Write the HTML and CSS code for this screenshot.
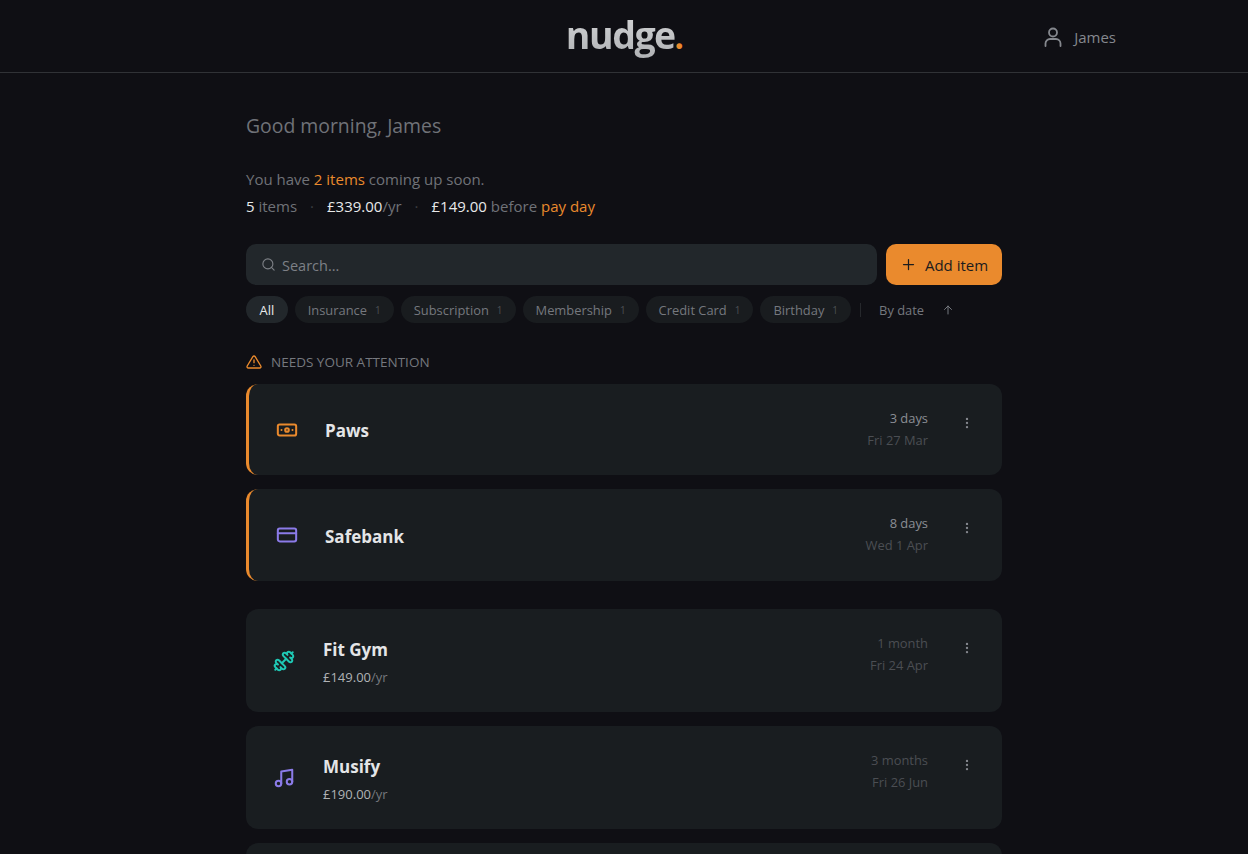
FILE: index.html
```html
<!DOCTYPE html>
<html lang="en">
<head>
    <meta charset="UTF-8">
    <meta name="viewport" content="width=device-width, initial-scale=1.0">
    <title>nudge</title>
    <link rel="stylesheet" href="styles.css">
</head>
<body>
    <header class="topbar">
        <div class="logo"><span class="logo-word">nudge</span><span class="logo-dot">.</span></div>
        <div class="user">
            <svg class="user-icon" viewBox="0 0 24 24" fill="none" stroke="currentColor" stroke-width="1.8" stroke-linecap="round" stroke-linejoin="round">
                <circle cx="12" cy="7.5" r="4"/>
                <path d="M4.5 21v-2.5a4.5 4.5 0 0 1 4.5-4.5h6a4.5 4.5 0 0 1 4.5 4.5V21"/>
            </svg>
            <span>James</span>
        </div>
    </header>

    <main class="container">
        <h1 class="greeting">Good morning, James</h1>
        <p class="soon">You have <span class="accent">2 items</span> coming up soon.</p>
        <p class="stats">
            <span><b>5</b> items</span>
            <span class="sep">·</span>
            <span><b>£339.00</b>/yr</span>
            <span class="sep">·</span>
            <span><b>£149.00</b> before <span class="accent">pay day</span></span>
        </p>

        <div class="toolbar">
            <label class="search">
                <svg class="search-icon" viewBox="0 0 24 24" fill="none" stroke="currentColor" stroke-width="1.8" stroke-linecap="round">
                    <circle cx="11" cy="11" r="8"/>
                    <path d="M21 21l-4.3-4.3"/>
                </svg>
                <input type="text" placeholder="Search...">
            </label>
            <button class="add-btn">
                <svg class="plus-icon" viewBox="0 0 24 24" fill="none" stroke="currentColor" stroke-width="2" stroke-linecap="round">
                    <path d="M12 4v16M4 12h16"/>
                </svg>
                Add item
            </button>
        </div>

        <div class="filters">
            <span class="chip active">All</span>
            <span class="chip">Insurance <i>1</i></span>
            <span class="chip">Subscription <i>1</i></span>
            <span class="chip">Membership <i>1</i></span>
            <span class="chip">Credit Card <i>1</i></span>
            <span class="chip">Birthday <i>1</i></span>
            <span class="divider"></span>
            <span class="sort">By date</span>
            <svg class="sort-icon" viewBox="0 0 24 24" fill="none" stroke="currentColor" stroke-width="2" stroke-linecap="round" stroke-linejoin="round">
                <path d="M12 20V4M5 11l7-7 7 7"/>
            </svg>
        </div>

        <h2 class="section-title">
            <svg class="warn-icon" viewBox="0 0 24 24" fill="none" stroke="currentColor" stroke-width="2" stroke-linecap="round" stroke-linejoin="round">
                <path d="M10.3 3.9 1.8 18a2 2 0 0 0 1.7 3h17a2 2 0 0 0 1.7-3L13.7 3.9a2 2 0 0 0-3.4 0z"/>
                <path d="M12 9v4M12 17h.01"/>
            </svg>
            NEEDS YOUR ATTENTION
        </h2>

        <section class="card urgent">
            <svg class="card-icon orange" viewBox="0 0 24 24" fill="none" stroke="currentColor" stroke-width="2.2" stroke-linecap="round" stroke-linejoin="round">
                <rect x="2" y="6" width="20" height="12" rx="2"/>
                <circle cx="12" cy="12" r="2"/>
                <path d="M6 12h.01M18 12h.01"/>
            </svg>
            <div class="card-main"><div class="card-name">Paws</div></div>
            <div class="card-when">
                <div class="when-rel">3 days</div>
                <div class="when-date">Fri 27 Mar</div>
            </div>
            <svg class="more" viewBox="0 0 24 24" fill="currentColor"><circle cx="12" cy="5" r="2"/><circle cx="12" cy="12" r="2"/><circle cx="12" cy="19" r="2"/></svg>
        </section>

        <section class="card urgent">
            <svg class="card-icon purple" viewBox="0 0 24 24" fill="none" stroke="currentColor" stroke-width="2.2" stroke-linecap="round" stroke-linejoin="round">
                <rect x="2" y="5" width="20" height="14" rx="2"/>
                <path d="M2 10h20"/>
            </svg>
            <div class="card-main"><div class="card-name">Safebank</div></div>
            <div class="card-when">
                <div class="when-rel">8 days</div>
                <div class="when-date">Wed 1 Apr</div>
            </div>
            <svg class="more" viewBox="0 0 24 24" fill="currentColor"><circle cx="12" cy="5" r="2"/><circle cx="12" cy="12" r="2"/><circle cx="12" cy="19" r="2"/></svg>
        </section>

        <div class="list">
            <section class="card">
                <svg class="card-icon teal" viewBox="0 0 24 24" fill="none" stroke="currentColor" stroke-width="2.2" stroke-linecap="round" stroke-linejoin="round">
                    <g transform="matrix(-1 0 0 1 24 0)">
                        <path d="M14.4 14.4 9.6 9.6"/>
                        <path d="M18.66 21.49a2 2 0 1 1-2.83-2.83l-1.77 1.77a2 2 0 1 1-2.83-2.83l6.36-6.36a2 2 0 1 1 2.83 2.83l-1.77 1.77a2 2 0 1 1 2.83 2.83z"/>
                        <path d="m21.5 21.5-1.4-1.4"/>
                        <path d="M3.9 3.9 2.5 2.5"/>
                        <path d="M6.4 12.77a2 2 0 1 1-2.83-2.83l1.77-1.77a2 2 0 1 1-2.83-2.83l2.83-2.83a2 2 0 1 1 2.83 2.83l1.77-1.77a2 2 0 1 1 2.83 2.83z"/>
                    </g>
                </svg>
                <div class="card-main">
                    <div class="card-name">Fit Gym</div>
                    <div class="card-price">£149.00<span>/yr</span></div>
                </div>
                <div class="card-when">
                    <div class="when-rel far">1 month</div>
                    <div class="when-date">Fri 24 Apr</div>
                </div>
                <svg class="more" viewBox="0 0 24 24" fill="currentColor"><circle cx="12" cy="5" r="2"/><circle cx="12" cy="12" r="2"/><circle cx="12" cy="19" r="2"/></svg>
            </section>

            <section class="card">
                <svg class="card-icon purple" viewBox="0 0 24 24" fill="none" stroke="currentColor" stroke-width="2.2" stroke-linecap="round" stroke-linejoin="round">
                    <path d="M9 18V5l12-2v13"/>
                    <circle cx="6" cy="18" r="3"/>
                    <circle cx="18" cy="16" r="3"/>
                </svg>
                <div class="card-main">
                    <div class="card-name">Musify</div>
                    <div class="card-price">£190.00<span>/yr</span></div>
                </div>
                <div class="card-when">
                    <div class="when-rel far">3 months</div>
                    <div class="when-date">Fri 26 Jun</div>
                </div>
                <svg class="more" viewBox="0 0 24 24" fill="currentColor"><circle cx="12" cy="5" r="2"/><circle cx="12" cy="12" r="2"/><circle cx="12" cy="19" r="2"/></svg>
            </section>

            <section class="card"></section>
        </div>
    </main>
</body>
</html>
```

FILE: styles.css
```css
html, body {
    height: 100%;
    overflow: hidden;
}

body {
    font-family: 'Open Sans', sans-serif;
    background-color: #0f0f14;
    margin: 0;
    color: #8b8e94;
}

.topbar {
    height: 72px;
    border-bottom: 1px solid #303236;
    display: flex;
    align-items: center;
    justify-content: center;
    position: relative;
}

.logo {
    margin-top: -4px;
    font-size: 37.5px;
    font-weight: 700;
    letter-spacing: -1.5px;
}

.logo-word {
    background: linear-gradient(#d6d7d9, #aeb0b3);
    -webkit-background-clip: text;
    background-clip: text;
    color: transparent;
}

.logo-dot {
    font-family: 'Lato', sans-serif;
    color: #ea8a2d;
}

.user {
    position: absolute;
    right: 132px;
    top: 25px;
    display: flex;
    align-items: center;
    gap: 9px;
    font-size: 15px;
    color: #85888e;
}

.user-icon {
    width: 24px;
    height: 24px;
}

.container {
    width: 756px;
    margin: 0 auto;
    padding-top: 39px;
}

.greeting {
    margin: 0 0 27px;
    font-size: 19.4px;
    line-height: 27px;
    font-weight: 400;
    color: #6f7278;
}

.soon, .stats {
    margin: 0;
    font-size: 15px;
    line-height: 27px;
    color: #6f7278;
}

.stats {
    display: flex;
    gap: 13px;
}

.stats b {
    font-weight: 400;
    color: #e8e9ea;
}

.sep {
    color: #3c3e42;
}

.accent {
    color: #ea8a2d;
}

.toolbar {
    display: flex;
    gap: 9px;
    margin-top: 24px;
}

.search {
    flex: 1;
    height: 41px;
    display: flex;
    align-items: center;
    gap: 5px;
    padding: 0 15px;
    background-color: #22272b;
    border-radius: 10px;
    color: #7d8086;
}

.search-icon {
    width: 15px;
    height: 15px;
}

.search input {
    flex: 1;
    margin-top: 1px;
    background: transparent;
    border: none;
    outline: none;
    padding: 0 1px;
    font-family: inherit;
    font-size: 14.5px;
    color: #d0d0d0;
}

.search input::placeholder {
    color: #7d8086;
    opacity: 1;
}

.add-btn {
    width: 116px;
    height: 41px;
    display: flex;
    align-items: center;
    justify-content: center;
    gap: 9px;
    padding: 0 0 0 1px;
    background-color: #ea8a2d;
    border: none;
    border-radius: 10px;
    font-family: inherit;
    font-size: 15px;
    color: #1b1c1e;
}

.plus-icon {
    width: 15px;
    height: 15px;
}

.filters {
    display: flex;
    align-items: center;
    gap: 7px;
    margin-top: 11px;
    font-size: 12.9px;
}

.chip {
    height: 27px;
    display: flex;
    align-items: center;
    gap: 8px;
    padding: 0 13px;
    background-color: #191c1f;
    border-radius: 14px;
    color: #75787e;
}

.chip i {
    font-style: normal;
    font-size: 10px;
    color: #4c4f53;
}

.chip.active {
    padding: 0 13.5px;
    background-color: #22272b;
    color: #e8e9ea;
}

.divider {
    width: 1px;
    height: 14px;
    margin: 0 11px 0 2px;
    background-color: #26282c;
}

.sort {
    color: #75787e;
}

.sort-icon {
    width: 12px;
    height: 12px;
    margin-left: 11px;
    color: #75787e;
}

.section-title {
    display: flex;
    align-items: center;
    gap: 9px;
    margin: 29px 0 12px;
    font-size: 13.5px;
    line-height: 20px;
    font-weight: 400;
    color: #75787e;
}

.warn-icon {
    width: 16px;
    height: 16px;
    color: #ea8a2d;
}

.card {
    display: flex;
    align-items: center;
    box-sizing: border-box;
    height: 103px;
    margin-bottom: 14px;
    padding: 0 28px 0 27px;
    background-color: #191d20;
    border-radius: 12px;
}

.card.urgent {
    height: 91px;
    border-left: 3px solid #ea8a2d;
    padding-left: 27px;
}

.card.urgent + .card.urgent {
    height: 92px;
}

.list {
    margin-top: 28px;
}

.card-icon {
    width: 22px;
    height: 22px;
    flex-shrink: 0;
    margin-right: 28px;
}

.card.urgent .card-icon {
    margin-right: 27px;
}

.orange { color: #ea8a2d; }
.purple { color: #8b7be8; }
.teal { color: #1fc8b4; }

.card-main {
    flex: 1;
    margin-top: 3px;
}

.card-name {
    font-size: 17px;
    line-height: 24px;
    font-weight: 700;
    color: #e4e5e7;
}

.card-price {
    margin-top: 6px;
    font-size: 13px;
    line-height: 18px;
    color: #b0b2b5;
}

.card-price span {
    color: #75787e;
}

.card-when {
    align-self: flex-start;
    margin-top: 23px;
    text-align: right;
    font-size: 12.9px;
    line-height: 22px;
}

.when-rel {
    color: #8b8e94;
}

.when-rel.far, .when-date {
    color: #4b4e53;
}

.more {
    align-self: flex-start;
    width: 14px;
    height: 14px;
    margin: 32px 0 0 32px;
    color: #85888e;
}
```
